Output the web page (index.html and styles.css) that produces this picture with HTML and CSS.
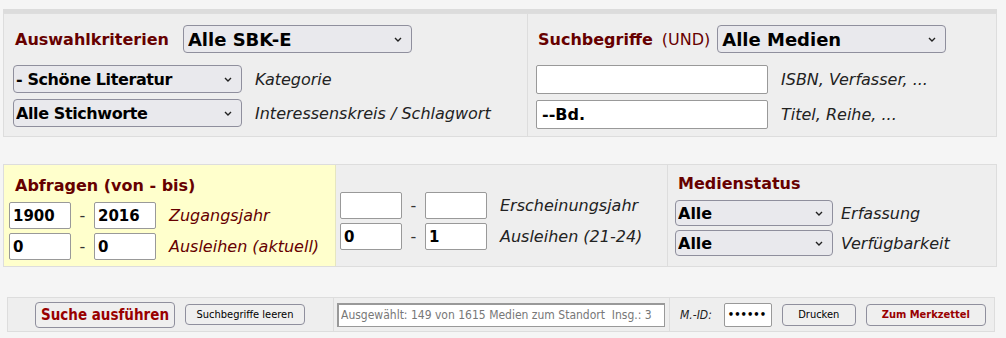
FILE: index.html
```html
<!DOCTYPE html>
<html>
<head>
  <meta charset="UTF-8">
  <title>Mediensuche</title>
  <link rel="stylesheet" href="styles.css">
</head>
<body>
  <div class="top-rule"></div>

  <!-- Kriterien und Suchbegriffe -->
  <div class="panel panel-top">
    <div class="cell cell-criteria">
      <div class="row row-head">
        <span class="title">Auswahlkriterien</span>
        <span class="sel-wrap">
          <select class="sel sel-wide sel-big"><option>Alle SBK-E</option></select>
          <svg class="chev" width="8" height="5" viewBox="0 0 8 5"><path d="M1 1 L4 4 L7 1" fill="none" stroke="#222" stroke-width="1.4"/></svg>
        </span>
      </div>
      <div class="row">
        <span class="sel-wrap">
          <select class="sel sel-wide"><option>- Schöne Literatur</option></select>
          <svg class="chev" width="8" height="5" viewBox="0 0 8 5"><path d="M1 1 L4 4 L7 1" fill="none" stroke="#222" stroke-width="1.4"/></svg>
        </span>
        <span class="hint">Kategorie</span>
      </div>
      <div class="row row-tight">
        <span class="sel-wrap">
          <select class="sel sel-wide"><option>Alle Stichworte</option></select>
          <svg class="chev" width="8" height="5" viewBox="0 0 8 5"><path d="M1 1 L4 4 L7 1" fill="none" stroke="#222" stroke-width="1.4"/></svg>
        </span>
        <span class="hint">Interessenskreis / Schlagwort</span>
      </div>
    </div>
    <div class="cell cell-terms">
      <div class="row row-head">
        <span class="title">Suchbegriffe</span>
        <span class="und">(UND)</span>
        <span class="sel-wrap">
          <select class="sel sel-wide sel-big"><option>Alle Medien</option></select>
          <svg class="chev" width="8" height="5" viewBox="0 0 8 5"><path d="M1 1 L4 4 L7 1" fill="none" stroke="#222" stroke-width="1.4"/></svg>
        </span>
      </div>
      <div class="row">
        <input class="txt txt-wide" type="text" value="">
        <span class="hint">ISBN, Verfasser, ...</span>
      </div>
      <div class="row row-tight">
        <input class="txt txt-wide" type="text" value="--Bd.">
        <span class="hint">Titel, Reihe, ...</span>
      </div>
    </div>
  </div>

  <!-- Abfragen -->
  <div class="panel panel-range">
    <div class="cell cell-yellow">
      <div class="title title-range">Abfragen (von - bis)</div>
      <div class="row row-first">
        <input class="txt txt-num" type="text" value="1900">
        <span class="dash">-</span>
        <input class="txt txt-num" type="text" value="2016">
        <span class="hint hint-red">Zugangsjahr</span>
      </div>
      <div class="row row-small">
        <input class="txt txt-num" type="text" value="0">
        <span class="dash">-</span>
        <input class="txt txt-num" type="text" value="0">
        <span class="hint hint-red">Ausleihen (aktuell)</span>
      </div>
    </div>
    <div class="cell cell-mid">
      <div class="row row-head">
        <input class="txt txt-num" type="text" value="">
        <span class="dash">-</span>
        <input class="txt txt-num" type="text" value="">
        <span class="hint">Erscheinungsjahr</span>
      </div>
      <div class="row row-small">
        <input class="txt txt-num" type="text" value="0">
        <span class="dash">-</span>
        <input class="txt txt-num" type="text" value="1">
        <span class="hint">Ausleihen (21-24)</span>
      </div>
    </div>
    <div class="cell cell-status">
      <div class="title title-status">Medienstatus</div>
      <div class="row row-first">
        <span class="sel-wrap">
          <select class="sel sel-small"><option>Alle</option></select>
          <svg class="chev" width="8" height="5" viewBox="0 0 8 5"><path d="M1 1 L4 4 L7 1" fill="none" stroke="#222" stroke-width="1.4"/></svg>
        </span>
        <span class="hint">Erfassung</span>
      </div>
      <div class="row row-small">
        <span class="sel-wrap">
          <select class="sel sel-small"><option>Alle</option></select>
          <svg class="chev" width="8" height="5" viewBox="0 0 8 5"><path d="M1 1 L4 4 L7 1" fill="none" stroke="#222" stroke-width="1.4"/></svg>
        </span>
        <span class="hint">Verfügbarkeit</span>
      </div>
    </div>
  </div>

  <!-- Aktionen -->
  <div class="panel panel-actions">
    <div class="cell cell-buttons">
      <button class="btn btn-main">Suche ausführen</button>
      <button class="btn btn-plain btn-clear">Suchbegriffe leeren</button>
    </div>
    <div class="cell cell-info">
      <input class="info" type="text" readonly value="Ausgewählt: 149 von 1615 Medien zum Standort  Insg.: 3">
    </div>
    <div class="cell cell-print">
      <span class="hint hint-id">M.-ID:</span>
      <input class="txt txt-pass" type="password" value="123456">
      <button class="btn btn-plain btn-print">Drucken</button>
      <button class="btn btn-plain btn-note">Zum Merkzettel</button>
    </div>
  </div>
</body>
</html>
```

FILE: styles.css
```css
/* Base */
* {
  box-sizing: border-box;
}

body {
  margin: 0;
  background-color: #f5f5f5;
  font-family: "DejaVu Sans", Verdana, sans-serif;
  font-size: 16px;
  color: #000;
}

.top-rule {
  margin: 9px 9px 0 3px;
  height: 4px;
  background-color: #dcdcdc;
}

/* Panels */
.panel {
  display: flex;
  margin-left: 3px;
  width: 994px;
  background-color: #eeeeee;
  border: 1px solid #dddddd;
}

.cell {
  border-right: 1px solid #dddddd;
}

.cell:last-child {
  border-right: none;
}

/* Rows */
.row {
  display: flex;
  align-items: center;
  margin-top: 12px;
}

.row.row-head {
  margin-top: 0;
}

.row.row-first {
  margin-top: 7px;
}

.row.row-tight {
  margin-top: 6px;
}

.row.row-small {
  margin-top: 4px;
}

.title {
  font-weight: bold;
  color: #660000;
  font-size: 16px;
}

.hint {
  font-style: italic;
  font-size: 16px;
  color: #222;
  margin-left: 13px;
}

.hint-red {
  color: #660000;
}

.und {
  color: #660000;
  margin: 0 7px 0 9px;
}

/* Form controls */
.sel-wrap {
  position: relative;
  display: flex;
}

.chev {
  position: absolute;
  right: 10px;
  top: 50%;
  margin-top: -2px;
  pointer-events: none;
}

.sel {
  -webkit-appearance: none;
  appearance: none;
  height: 28px;
  font-family: "DejaVu Sans", Verdana, sans-serif;
  font-weight: bold;
  font-size: 16px;
  letter-spacing: -0.4px;
  color: #000;
  background-color: #e9e9ed;
  border: 1px solid #8f8f9d;
  border-radius: 4px;
  padding: 0 2px;
}

.sel-big {
  font-size: 18px;
  letter-spacing: 0;
  padding-left: 4px;
}

.sel-wide {
  width: 229px;
}

.sel-small {
  width: 158px;
  height: 26px;
  letter-spacing: 0;
}

.txt {
  font-family: "DejaVu Sans", Verdana, sans-serif;
  font-weight: bold;
  font-size: 16px;
  background-color: #fff;
  border: 1px solid #999;
  border-radius: 2px;
  padding: 0 5px;
}

.txt-wide {
  width: 232px;
  height: 29px;
}

.txt-num {
  width: 62px;
  height: 27px;
  font-size: 15px;
  padding: 0 3px;
}

.dash {
  width: 23px;
  text-align: center;
  color: #333;
}

/* Top panel */
.panel-top {
  height: 124px;
}

.cell-criteria {
  width: 524px;
  padding: 11px 0 0 9px;
}

.cell-criteria .title {
  margin: 0 14px 0 2px;
}

.cell-terms {
  flex: 1;
  padding: 11px 0 0 8px;
}

.cell-terms .title {
  margin-left: 2px;
}

/* Range panel */
.panel-range {
  margin-top: 27px;
  height: 103px;
}

.cell-yellow {
  width: 332px;
  background-color: #ffffcc;
  border-right-color: #e6e6c0;
  padding: 11px 0 0 5px;
}

.title-range {
  margin-left: 6px;
}

.cell-mid {
  width: 332px;
  padding: 27px 0 0 4px;
}

.cell-status {
  flex: 1;
  padding: 9px 0 0 7px;
}

.title-status {
  margin-left: 3px;
}

.cell-status .hint {
  margin-left: 8px;
}

/* Actions bar */
.panel-actions {
  margin: 30px 0 0 7px;
  width: 988px;
  height: 35px;
  align-items: center;
}

.cell-buttons,
.cell-info,
.cell-print {
  display: flex;
  align-items: center;
  height: 100%;
}

.cell-buttons {
  width: 326px;
  padding-left: 27px;
}

.btn {
  font-family: "DejaVu Sans Condensed", "Liberation Sans", sans-serif;
  background-color: #efefef;
  border: 1px solid #8f8f9d;
  border-radius: 4px;
  color: #000;
  cursor: pointer;
  white-space: nowrap;
}

.btn-main {
  height: 26px;
  width: 140px;
  font-size: 15px;
  font-weight: bold;
  color: #990000;
  padding: 0;
}

.btn-plain {
  height: 21px;
  font-size: 11px;
  padding: 0;
  margin-left: 10px;
}

.btn-clear {
  width: 120px;
}

.cell-info {
  width: 336px;
  padding-left: 3px;
}

.info {
  width: 328px;
  height: 24px;
  font-family: "DejaVu Sans Condensed", "Liberation Sans", sans-serif;
  font-size: 12px;
  color: #777;
  border: 1px solid #999;
  border-top-width: 2px;
  border-left-width: 2px;
  padding: 0 2px;
  background-color: #fff;
}

.cell-print {
  flex: 1;
  padding-left: 10px;
}

.hint-id {
  margin-left: 0;
  font-family: "DejaVu Sans Condensed", "Liberation Sans", sans-serif;
  font-size: 12px;
}

.txt-pass {
  width: 48px;
  height: 24px;
  margin-left: 12px;
  font-size: 10px;
  padding: 0 3px;
}

.btn-print {
  width: 74px;
  height: 22px;
}

.btn-note {
  width: 120px;
  height: 22px;
  font-weight: bold;
  color: #990000;
}
```
